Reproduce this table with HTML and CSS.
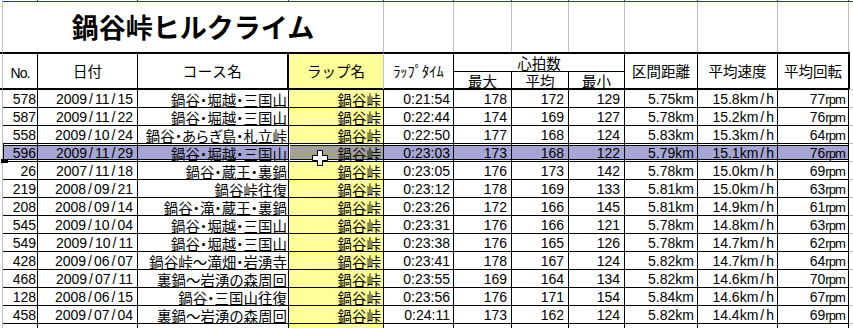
FILE: index.html
```html
<!DOCTYPE html>
<html lang="ja">
<head>
<meta charset="utf-8">
<title>鍋谷峠ヒルクライム</title>
<link rel="stylesheet" href="styles.css">
</head>
<body>
<div class="sheet">
<table class="grid">
<colgroup>
<col class="w-stub"><col class="w-no"><col class="w-date"><col class="w-course"><col class="w-lap"><col class="w-time"><col class="w-hr1"><col class="w-hr2"><col class="w-hr3"><col class="w-dist"><col class="w-speed"><col class="w-cad"><col class="w-rest">
</colgroup>
<tr class="r-top"><td class="stub"></td><td></td><td></td><td></td><td></td><td></td><td></td><td></td><td></td><td></td><td></td><td></td><td class="rest"></td></tr>
<tr class="r-title"><td class="stub"></td><td class="title" colspan="4">鍋谷峠ヒルクライム</td><td></td><td></td><td></td><td></td><td></td><td></td><td></td><td class="rest"></td></tr>
<tr class="r-h1">
<td class="stub" rowspan="2"></td>
<td class="h no" rowspan="2">No.</td>
<td class="h" rowspan="2">日付</td>
<td class="h course-h" rowspan="2">コース名</td>
<td class="h lap-h" rowspan="2">ラップ名</td>
<td class="h hw" rowspan="2">ﾗｯﾌﾟﾀｲﾑ</td>
<td class="h grp" colspan="3">心拍数</td>
<td class="h" rowspan="2">区間距離</td>
<td class="h" rowspan="2">平均速度</td>
<td class="h last-h" rowspan="2">平均回転</td>
<td class="rest" rowspan="2"></td>
</tr>
<tr class="r-h2"><td class="h sub">最大</td><td class="h sub">平均</td><td class="h sub">最小</td></tr>

<tr class="d"><td class="stub"></td><td class="n">578</td><td class="dt">2009<span class="s">/</span>11<span class="s">/</span>15</td><td class="jp c">鍋谷・堀越・三国山</td><td class="jp lap">鍋谷峠</td><td class="tm">0:21:54</td><td class="hr">178</td><td class="hr">172</td><td class="hr">129</td><td class="ds">5.75km</td><td class="sp">15.8km<span class="s">/</span>h</td><td class="cd">77<span class="u">rpm</span></td><td class="rest"></td></tr>
<tr class="d"><td class="stub"></td><td class="n">587</td><td class="dt">2009<span class="s">/</span>11<span class="s">/</span>22</td><td class="jp c">鍋谷・堀越・三国山</td><td class="jp lap">鍋谷峠</td><td class="tm">0:22:44</td><td class="hr">174</td><td class="hr">169</td><td class="hr">127</td><td class="ds">5.78km</td><td class="sp">15.2km<span class="s">/</span>h</td><td class="cd">76<span class="u">rpm</span></td><td class="rest"></td></tr>
<tr class="d"><td class="stub"></td><td class="n">558</td><td class="dt">2009<span class="s">/</span>10<span class="s">/</span>24</td><td class="jp c">鍋谷・あらぎ島・札立峠</td><td class="jp lap">鍋谷峠</td><td class="tm">0:22:50</td><td class="hr">177</td><td class="hr">168</td><td class="hr">124</td><td class="ds">5.83km</td><td class="sp">15.3km<span class="s">/</span>h</td><td class="cd">64<span class="u">rpm</span></td><td class="rest"></td></tr>
<tr class="d sel"><td class="stub"></td><td class="n first">596</td><td class="dt">2009<span class="s">/</span>11<span class="s">/</span>29</td><td class="jp c">鍋谷・堀越・三国山</td><td class="jp lap active">鍋谷峠</td><td class="tm">0:23:03</td><td class="hr">173</td><td class="hr">168</td><td class="hr">122</td><td class="ds">5.79km</td><td class="sp">15.1km<span class="s">/</span>h</td><td class="cd">76<span class="u">rpm</span></td><td class="rest"></td></tr>
<tr class="d"><td class="stub"></td><td class="n">26</td><td class="dt">2007<span class="s">/</span>11<span class="s">/</span>18</td><td class="jp c">鍋谷・蔵王・裏鍋</td><td class="jp lap">鍋谷峠</td><td class="tm">0:23:05</td><td class="hr">176</td><td class="hr">173</td><td class="hr">142</td><td class="ds">5.78km</td><td class="sp">15.0km<span class="s">/</span>h</td><td class="cd">69<span class="u">rpm</span></td><td class="rest"></td></tr>
<tr class="d"><td class="stub"></td><td class="n">219</td><td class="dt">2008<span class="s">/</span>09<span class="s">/</span>21</td><td class="jp c">鍋谷峠往復</td><td class="jp lap">鍋谷峠</td><td class="tm">0:23:12</td><td class="hr">178</td><td class="hr">169</td><td class="hr">133</td><td class="ds">5.81km</td><td class="sp">15.0km<span class="s">/</span>h</td><td class="cd">63<span class="u">rpm</span></td><td class="rest"></td></tr>
<tr class="d"><td class="stub"></td><td class="n">208</td><td class="dt">2008<span class="s">/</span>09<span class="s">/</span>14</td><td class="jp c">鍋谷・滝・蔵王・裏鍋</td><td class="jp lap">鍋谷峠</td><td class="tm">0:23:26</td><td class="hr">172</td><td class="hr">166</td><td class="hr">145</td><td class="ds">5.81km</td><td class="sp">14.9km<span class="s">/</span>h</td><td class="cd">61<span class="u">rpm</span></td><td class="rest"></td></tr>
<tr class="d"><td class="stub"></td><td class="n">545</td><td class="dt">2009<span class="s">/</span>10<span class="s">/</span>04</td><td class="jp c">鍋谷・堀越・三国山</td><td class="jp lap">鍋谷峠</td><td class="tm">0:23:31</td><td class="hr">176</td><td class="hr">166</td><td class="hr">121</td><td class="ds">5.78km</td><td class="sp">14.8km<span class="s">/</span>h</td><td class="cd">63<span class="u">rpm</span></td><td class="rest"></td></tr>
<tr class="d"><td class="stub"></td><td class="n">549</td><td class="dt">2009<span class="s">/</span>10<span class="s">/</span>11</td><td class="jp c">鍋谷・堀越・三国山</td><td class="jp lap">鍋谷峠</td><td class="tm">0:23:38</td><td class="hr">176</td><td class="hr">165</td><td class="hr">126</td><td class="ds">5.78km</td><td class="sp">14.7km<span class="s">/</span>h</td><td class="cd">62<span class="u">rpm</span></td><td class="rest"></td></tr>
<tr class="d"><td class="stub"></td><td class="n">428</td><td class="dt">2009<span class="s">/</span>06<span class="s">/</span>07</td><td class="jp c">鍋谷峠～滝畑・岩湧寺</td><td class="jp lap">鍋谷峠</td><td class="tm">0:23:41</td><td class="hr">178</td><td class="hr">167</td><td class="hr">124</td><td class="ds">5.82km</td><td class="sp">14.7km<span class="s">/</span>h</td><td class="cd">64<span class="u">rpm</span></td><td class="rest"></td></tr>
<tr class="d"><td class="stub"></td><td class="n">468</td><td class="dt">2009<span class="s">/</span>07<span class="s">/</span>11</td><td class="jp c">裏鍋～岩湧の森周回</td><td class="jp lap">鍋谷峠</td><td class="tm">0:23:55</td><td class="hr">169</td><td class="hr">164</td><td class="hr">134</td><td class="ds">5.82km</td><td class="sp">14.6km<span class="s">/</span>h</td><td class="cd">70<span class="u">rpm</span></td><td class="rest"></td></tr>
<tr class="d"><td class="stub"></td><td class="n">128</td><td class="dt">2008<span class="s">/</span>06<span class="s">/</span>15</td><td class="jp c">鍋谷・三国山往復</td><td class="jp lap">鍋谷峠</td><td class="tm">0:23:56</td><td class="hr">176</td><td class="hr">171</td><td class="hr">154</td><td class="ds">5.84km</td><td class="sp">14.6km<span class="s">/</span>h</td><td class="cd">67<span class="u">rpm</span></td><td class="rest"></td></tr>
<tr class="d"><td class="stub"></td><td class="n">458</td><td class="dt">2009<span class="s">/</span>07<span class="s">/</span>04</td><td class="jp c">裏鍋～岩湧の森周回</td><td class="jp lap">鍋谷峠</td><td class="tm">0:24:11</td><td class="hr">173</td><td class="hr">162</td><td class="hr">124</td><td class="ds">5.82km</td><td class="sp">14.4km<span class="s">/</span>h</td><td class="cd">69<span class="u">rpm</span></td><td class="rest"></td></tr>
<tr class="d"><td class="stub"></td><td></td><td></td><td></td><td class="lap"></td><td></td><td></td><td></td><td></td><td></td><td></td><td></td><td class="rest"></td></tr>
</table>
<div class="handle"></div>
<svg class="cursor" width="17" height="17" viewBox="0 0 17 17" aria-hidden="true">
<path d="M5.5 0.5h5v5h5v5h-5v5h-5v-5h-5v-5h5z" fill="#fff" stroke="#000" stroke-width="1"/>
</svg>
</div>
</body>
</html>
```

FILE: styles.css
```css
html, body {
  margin: 0;
  padding: 0;
  background: #fff;
  overflow: hidden;
}
body {
  width: 853px;
  height: 328px;
}
.sheet {
  position: relative;
  width: 853px;
  height: 328px;
  overflow: hidden;
}
.grid {
  border-collapse: separate;
  border-spacing: 0;
  table-layout: fixed;
  width: 869px;
  font-family: "Liberation Sans", Arial, sans-serif;
  font-size: 14px;
  color: #000;
}
.w-stub { width: 3px; }
.w-no { width: 35px; }
.w-date { width: 100px; }
.w-course { width: 151px; }
.w-lap { width: 95px; }
.w-time { width: 70px; }
.w-hr1 { width: 58px; }
.w-hr2 { width: 57px; }
.w-hr3 { width: 56px; }
.w-dist { width: 73px; }
.w-speed { width: 80px; }
.w-cad { width: 71px; }
.w-rest { width: 20px; }

.grid td {
  box-sizing: border-box;
  padding: 0;
  white-space: nowrap;
}

/* top strip: bottom of the row above */
.r-top { height: 2px; }
.r-top td {
  height: 2px;
  font-size: 0;
  line-height: 0;
  border-right: 1px solid #2a2ad0;
  border-bottom: 1px solid #2a2ad0;
}
.r-top td.stub { border-right: 1px solid #c0c0c0; border-bottom: 0; }
.r-top td.rest { border-right: 0; }

/* title */
.r-title { height: 50px; }
.r-title td {
  height: 50px;
  border-right: 1px solid #c0c0c0;
}
.title {
  font-family: "Noto Sans CJK JP", sans-serif;
  font-weight: 700;
  font-size: 27px;
  line-height: 30px;
  text-align: center;
  vertical-align: middle;
}

/* header */
.r-h1 { height: 20px; }
.r-h2 { height: 18px; }
.h {
  font-family: "Noto Sans CJK JP", sans-serif;
  font-size: 14.5px;
  text-align: center;
  vertical-align: middle;
  border-right: 1px solid #000;
  border-bottom: 2px solid #000;
  line-height: 16px;
}
.r-h1 td { border-top: 2px solid #000; }
.r-h1 td.stub { border-right: 1px solid #c0c0c0; border-bottom: 2px solid #000; }
.r-h1 td.rest { border-top: 0; border-right: 1px solid #c0c0c0; border-bottom: 1px solid #c0c0c0; }
.h.no {
  font-family: "Liberation Sans Narrow", "Liberation Sans", sans-serif;
  font-size: 14px;
  letter-spacing: -1px;
  padding-top: 3px;
}
.h.course-h { border-right: 2px solid #000; letter-spacing: 0.5px; }
.h.lap-h { background: #ffff99; border-right: 1px solid #c0c0c0; }
.h.grp { border-bottom: 1px solid #000; padding-top: 1px; }
.h.sub { line-height: 14px; padding-top: 1px; }
.h.last-h { box-shadow: 1px 0 0 #000; }

/* data rows */
.d { height: 18px; }
.d td {
  height: 18px;
  border-right: 1px solid #000;
  border-bottom: 1px solid #000;
  text-align: right;
  vertical-align: bottom;
  line-height: 15px;
  padding-right: 3px;
}
.d td.stub { border-right: 1px solid #c0c0c0; border-bottom: 0; padding: 0; }
.d td.rest { border-right: 1px solid #c0c0c0; border-bottom: 1px solid #c0c0c0; padding: 0; }
.d td.n { padding-right: 1px; }
.d td.dt { padding-right: 4px; }
.d td.hr { padding-right: 4px; }
.d td.c { padding-right: 1px; }
.d td.lap { background: #ffff99; padding-right: 2px; }
.jp {
  font-family: "Noto Sans CJK JP", sans-serif;
  font-size: 14.5px;
  font-feature-settings: "palt";
}
.s { margin: 0 2px; }
.u {
  font-size: 13px;
  letter-spacing: -0.9px;
}

/* selected row */
.d.sel td {
  background: #a6a6d6;
  box-shadow: inset 0 1px 0 #fff, inset 0 2px 0 #000, inset 0 -1px 0 #fff, inset 0 -2px 0 #000;
}
.d.sel td.stub { background: #fff; box-shadow: none; }
.d.sel td.rest { background: #fff; box-shadow: none; }
.d.sel td.first {
  box-shadow: inset 1px 0 0 #000, inset 0 1px 0 #fff, inset 0 2px 0 #000, inset 0 -1px 0 #fff, inset 0 -2px 0 #000;
}
.d.sel td.active {
  background: #a3a38d;
  box-shadow: inset 1px 0 0 #fff, inset 0 1px 0 #fff, inset 0 2px 0 #000080, inset 0 -1px 0 #fff, inset 0 -2px 0 #000080;
}

/* overlays */
.handle {
  position: absolute;
  left: 1px;
  top: 159px;
  width: 7px;
  height: 4px;
  background: #000;
}
.cursor {
  position: absolute;
  left: 312px;
  top: 150px;
}
```
